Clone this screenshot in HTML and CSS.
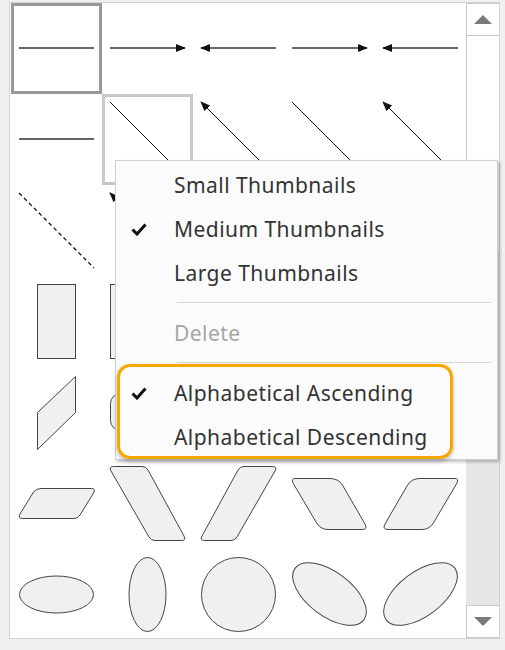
FILE: index.html
```html
<!DOCTYPE html>
<html lang="en">
<head>
  <meta charset="UTF-8">
  <title>Shape Gallery</title>
  <link rel="stylesheet" href="styles.css">
</head>
<body>
  <svg width="0" height="0" class="defs">
    <defs>
      <marker id="head" viewBox="0 0 10 8" refX="9" refY="4" markerWidth="10" markerHeight="8" markerUnits="userSpaceOnUse" orient="auto-start-reverse">
        <path d="M0 0 L10 4 L0 8 Z" fill="#111"/>
      </marker>
    </defs>
  </svg>

  <div class="panel">
    <div class="grid">
      <!-- row 1 -->
      <div class="cell selected"><svg viewBox="0 0 91 91"><line class="ln" x1="8" y1="45" x2="83" y2="45"/></svg></div>
      <div class="cell"><svg viewBox="0 0 91 91"><line class="ln" x1="8" y1="45" x2="83" y2="45" marker-end="url(#head)"/></svg></div>
      <div class="cell"><svg viewBox="0 0 91 91"><line class="ln" x1="8" y1="45" x2="83" y2="45" marker-start="url(#head)"/></svg></div>
      <div class="cell"><svg viewBox="0 0 91 91"><line class="ln" x1="8" y1="45" x2="83" y2="45" marker-end="url(#head)"/></svg></div>
      <div class="cell"><svg viewBox="0 0 91 91"><line class="ln" x1="8" y1="45" x2="83" y2="45" marker-start="url(#head)"/></svg></div>
      <!-- row 2 -->
      <div class="cell"><svg viewBox="0 0 91 91"><line class="ln" x1="8" y1="45" x2="83" y2="45"/></svg></div>
      <div class="cell hover"><svg viewBox="0 0 91 91"><line class="thin" x1="8" y1="8" x2="83" y2="83"/></svg></div>
      <div class="cell"><svg viewBox="0 0 91 91"><line class="thin" x1="8" y1="8" x2="83" y2="83" marker-start="url(#head)"/></svg></div>
      <div class="cell"><svg viewBox="0 0 91 91"><line class="thin" x1="8" y1="8" x2="83" y2="83"/></svg></div>
      <div class="cell"><svg viewBox="0 0 91 91"><line class="thin" x1="8" y1="8" x2="83" y2="83" marker-start="url(#head)"/></svg></div>
      <!-- row 3 -->
      <div class="cell"><svg viewBox="0 0 91 91"><line class="thin dash" x1="8" y1="8" x2="83" y2="83"/></svg></div>
      <div class="cell"><svg viewBox="0 0 91 91"><line class="thin dash" x1="8" y1="8" x2="83" y2="83" marker-start="url(#head)"/></svg></div>
      <div class="cell"><svg viewBox="0 0 91 91"><line class="thin dash" x1="8" y1="8" x2="83" y2="83" marker-end="url(#head)"/></svg></div>
      <div class="cell"><svg viewBox="0 0 91 91"><line class="thin dash" x1="8" y1="83" x2="83" y2="8"/></svg></div>
      <div class="cell"><svg viewBox="0 0 91 91"><line class="thin dash" x1="8" y1="83" x2="83" y2="8" marker-end="url(#head)"/></svg></div>
      <!-- row 4 -->
      <div class="cell"><svg viewBox="0 0 91 91"><rect class="shp" x="26.5" y="8.5" width="38" height="74"/></svg></div>
      <div class="cell"><svg viewBox="0 0 91 91"><rect class="shp" x="8.5" y="8.5" width="75" height="74"/></svg></div>
      <div class="cell"><svg viewBox="0 0 91 91"><rect class="shp" x="8.5" y="26.5" width="75" height="38"/></svg></div>
      <div class="cell"><svg viewBox="0 0 91 91"><rect class="shp" x="8.5" y="8.5" width="75" height="74" rx="8"/></svg></div>
      <div class="cell"><svg viewBox="0 0 91 91"><rect class="shp" x="26.5" y="8.5" width="38" height="74" rx="8"/></svg></div>
      <!-- row 5 -->
      <div class="cell"><svg viewBox="0 0 91 91"><polygon class="shp" points="26.5,45.5 64.5,9.5 64.5,45.5 26.5,82.5"/></svg></div>
      <div class="cell"><svg viewBox="0 0 91 91"><rect class="shp" x="8.5" y="26.5" width="75" height="37" rx="10"/></svg></div>
      <div class="cell"><svg viewBox="0 0 91 91"><polygon class="shp" points="8.5,26.5 64.5,26.5 83.5,63.5 27.5,63.5"/></svg></div>
      <div class="cell"><svg viewBox="0 0 91 91"><polygon class="shp" points="27.5,26.5 83.5,26.5 64.5,63.5 8.5,63.5"/></svg></div>
      <div class="cell"><svg viewBox="0 0 91 91"><polygon class="shp" points="26.5,9.5 64.5,45.5 64.5,82.5 26.5,45.5"/></svg></div>
      <!-- row 6 -->
      <div class="cell"><svg viewBox="0 0 91 91"><path class="shp" d="M30 30.5 H80.5 Q85 30.5 82.5 35 L69 57 Q67 60.5 63 60.5 H11.5 Q6.5 60.5 9 56 L22.5 34 Q25 30.5 30 30.5 Z"/></svg></div>
      <div class="cell"><svg viewBox="0 0 91 91"><path class="shp" d="M11.5 8.5 H40 Q44 8.5 46 12 L82 78 Q84.5 82.5 79.5 82.5 H53 Q49 82.5 47 79 L9 13 Q6.5 8.5 11.5 8.5 Z"/></svg></div>
      <div class="cell"><svg viewBox="0 0 91 91"><path class="shp" d="M79.5 8.5 H51 Q47 8.5 45 12 L9 78 Q6.5 82.5 11.5 82.5 H38 Q42 82.5 44 79 L82 13 Q84.5 8.5 79.5 8.5 Z"/></svg></div>
      <div class="cell"><svg viewBox="0 0 91 91"><path class="shp" d="M11 20.5 H46 Q55 20.5 59 28 L81 66 Q84 71.5 78 71.5 H44 Q36 71.5 32 64 L9 25 Q7 20.5 11 20.5 Z"/></svg></div>
      <div class="cell"><svg viewBox="0 0 91 91"><path class="shp" d="M80 20.5 H45 Q36 20.5 32 28 L10 66 Q7 71.5 13 71.5 H47 Q55 71.5 59 64 L82 25 Q84 20.5 80 20.5 Z"/></svg></div>
      <!-- row 7 -->
      <div class="cell"><svg viewBox="0 0 91 91"><ellipse class="shp" cx="45.5" cy="45.5" rx="37" ry="18.5"/></svg></div>
      <div class="cell"><svg viewBox="0 0 91 91"><ellipse class="shp" cx="45.5" cy="45.5" rx="18.5" ry="37"/></svg></div>
      <div class="cell"><svg viewBox="0 0 91 91"><circle class="shp" cx="45.5" cy="45.5" r="37"/></svg></div>
      <div class="cell"><svg viewBox="0 0 91 91"><ellipse class="shp" cx="45.5" cy="45" rx="43" ry="22" transform="rotate(37 45.5 45)"/></svg></div>
      <div class="cell"><svg viewBox="0 0 91 91"><ellipse class="shp" cx="45.5" cy="45" rx="43" ry="22" transform="rotate(-37 45.5 45)"/></svg></div>
    </div>

    <div class="scroll">
      <div class="sbtn"><span class="tri up"></span></div>
      <div class="thumb"></div>
      <div class="track"></div>
      <div class="sbtn"><span class="tri down"></span></div>
    </div>

    <div class="menu">
      <div class="item"><span class="check"></span>Small Thumbnails</div>
      <div class="item"><span class="check"><svg width="16" height="13" viewBox="0 0 16 13"><polyline points="1.5,6.5 6,11 14.5,1.5" fill="none" stroke="#111" stroke-width="3"/></svg></span>Medium Thumbnails</div>
      <div class="item"><span class="check"></span>Large Thumbnails</div>
      <div class="sep"></div>
      <div class="item disabled"><span class="check"></span>Delete</div>
      <div class="sep"></div>
      <div class="item"><span class="check"><svg width="16" height="13" viewBox="0 0 16 13"><polyline points="1.5,6.5 6,11 14.5,1.5" fill="none" stroke="#111" stroke-width="3"/></svg></span>Alphabetical Ascending</div>
      <div class="item"><span class="check"></span>Alphabetical Descending</div>
      <div class="mark"></div>
    </div>
  </div>
</body>
</html>
```

FILE: styles.css
```css
body {
  margin: 0;
  background: #f0f0f0;
  font-family: "Noto Sans", "Open Sans", sans-serif;
}
.defs { position: absolute; }

.panel {
  position: relative;
  display: flex;
  margin: 2px 0 0 9px;
  width: 489px; height: 635px;
  border: 1px solid #d2d2d2;
  background: #fff;
}
.grid {
  width: 455px;
  padding-left: 1px;
  display: grid;
  grid-template-columns: repeat(5, 91px);
  grid-auto-rows: 91px;
  align-content: start;
  overflow: hidden;
}
.cell { position: relative; }
.cell svg { display: block; width: 91px; height: 91px; }
.cell.selected { box-shadow: inset 0 0 0 3px #999; }
.cell.hover { box-shadow: inset 0 0 0 3px #c8c8c8; }

.ln { stroke: #333; stroke-width: 1.3; }
.thin { stroke: #111; stroke-width: 1; }
.dash { stroke-width: 1.3; stroke-dasharray: 4 3; }
.shp { fill: #f0f0f0; stroke: #444; stroke-width: 1; }

/* scrollbar */
.scroll {
  width: 33px;
  display: flex; flex-direction: column;
  background: #e6e6e6;
}
.sbtn {
  height: 33px;
  box-sizing: border-box;
  border: 1px solid #c8c8c8;
  border-right: none;
  background: #fff;
  display: flex; align-items: center; justify-content: center;
}
.thumb {
  height: 216px;
  box-sizing: border-box;
  border-left: 1px solid #c8c8c8;
  background: #fff;
}
.track { flex: 1; }
.tri { width: 0; height: 0; border-left: 9px solid transparent; border-right: 9px solid transparent; }
.tri.up { border-bottom: 9px solid #7a7a7a; }
.tri.down { border-top: 9px solid #7a7a7a; }

/* context menu */
.menu {
  position: absolute;
  left: 105px; top: 157px;
  width: 381px;
  padding: 2px 0 0;
  border: 1px solid #cfcfcf;
  background: #fbfbfb;
  box-shadow: 2px 2px 3px rgba(0,0,0,0.25);
  font-size: 21px;
  letter-spacing: 0.45px;
  color: #333;
}
.item {
  display: flex; align-items: center;
  height: 44px; line-height: 44px;
}
.item.disabled { color: #a6a6a6; }
.check {
  width: 58px; flex: none;
  display: flex; align-items: center;
  padding-left: 15px; box-sizing: border-box;
}
.check svg { display: block; }
.sep {
  height: 16px;
  margin: 0 6px 0 61px;
  background: linear-gradient(#d8d8d8, #d8d8d8) 0 7px / 100% 1px no-repeat;
}
.mark {
  position: absolute;
  left: 1px; top: 203px;
  width: 336px; height: 95px;
  box-sizing: border-box;
  border: 3px solid #f5a800;
  border-radius: 13px;
  box-shadow: 0 2px 4px rgba(0,0,0,0.25);
}
```
